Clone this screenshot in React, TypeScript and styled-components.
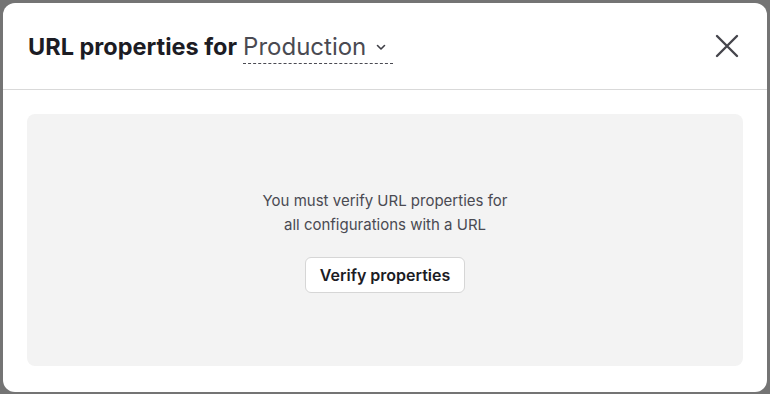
import styled, { createGlobalStyle } from 'styled-components';

const GlobalStyle = createGlobalStyle`
  html, body {
    margin: 0;
    padding: 0;
    background: #747474;
  }
  body {
    font-family: Inter, "Noto Sans", Arial, sans-serif;
  }
`;

function ChevronDown() {
  return (
    <svg width="12" height="12" viewBox="0 0 12 12" fill="none">
      <path d="M2.5 4.5 L6 8 L9.5 4.5" stroke="#3f3f46" strokeWidth="1.6" strokeLinecap="round" strokeLinejoin="round" />
    </svg>
  );
}

function CloseIcon() {
  return (
    <svg width="24" height="24" viewBox="0 0 24 24" fill="none">
      <path d="M2 2 L22 22 M22 2 L2 22" stroke="#45454c" strokeWidth="2.4" strokeLinecap="round" />
    </svg>
  );
}

export default function App() {
  return (
    <>
      <GlobalStyle />
      <Backdrop>
        <Modal>
          <Header>
            <Title>
              URL properties for
              <EnvSelect>
                Production
                <ChevronDown />
              </EnvSelect>
            </Title>
            <CloseButton aria-label="Close">
              <CloseIcon />
            </CloseButton>
          </Header>
          <Body>
            <EmptyPanel>
              <Message>
                You must verify URL properties for
                <br />
                all configurations with a URL
              </Message>
              <VerifyButton>Verify properties</VerifyButton>
            </EmptyPanel>
          </Body>
        </Modal>
      </Backdrop>
    </>
  );
}

const Backdrop = styled.div`
  width: 770px;
  height: 394px;
  box-sizing: border-box;
  padding: 3px 3px 2px 3px;
`;

const Modal = styled.div`
  background: #ffffff;
  border-radius: 12px;
  height: 100%;
  display: flex;
  flex-direction: column;
  overflow: hidden;
`;

const Header = styled.div`
  height: 87px;
  box-sizing: border-box;
  display: flex;
  align-items: center;
  justify-content: space-between;
  padding: 0 28px 0 25px;
  border-bottom: 1px solid #d9d9d9;
`;

const Title = styled.h2`
  margin: 0;
  font-size: 23.5px;
  font-weight: 700;
  color: #1c1c24;
  display: flex;
  align-items: center;
  gap: 6px;
`;

const EnvSelect = styled.span`
  display: inline-flex;
  align-items: center;
  gap: 9px;
  font-size: 24px;
  font-weight: 400;
  color: #4a4a52;
  padding: 0 6px 2px 0;
  border-bottom: 1px dashed #4a4a52;
  margin-top: 4px;
`;

const CloseButton = styled.button`
  background: none;
  border: none;
  padding: 0;
  cursor: pointer;
  display: flex;
  align-items: center;
  margin-top: -1px;
`;

const Body = styled.div`
  flex: 1;
  padding: 24px 24px 26px 24px;
  display: flex;
`;

const EmptyPanel = styled.div`
  flex: 1;
  background: #f3f3f3;
  border-radius: 8px;
  display: flex;
  flex-direction: column;
  align-items: center;
  justify-content: center;
  gap: 20px;
  padding-top: 2px;
`;

const Message = styled.p`
  margin: 0;
  text-align: center;
  font-size: 15px;
  line-height: 24px;
  color: #4a4a52;
`;

const VerifyButton = styled.button`
  font-family: inherit;
  font-size: 16px;
  font-weight: 600;
  color: #1c1c24;
  background: #ffffff;
  border: 1px solid #d6d6d6;
  border-radius: 6px;
  height: 36px;
  padding: 0 14px;
  cursor: pointer;
`;
